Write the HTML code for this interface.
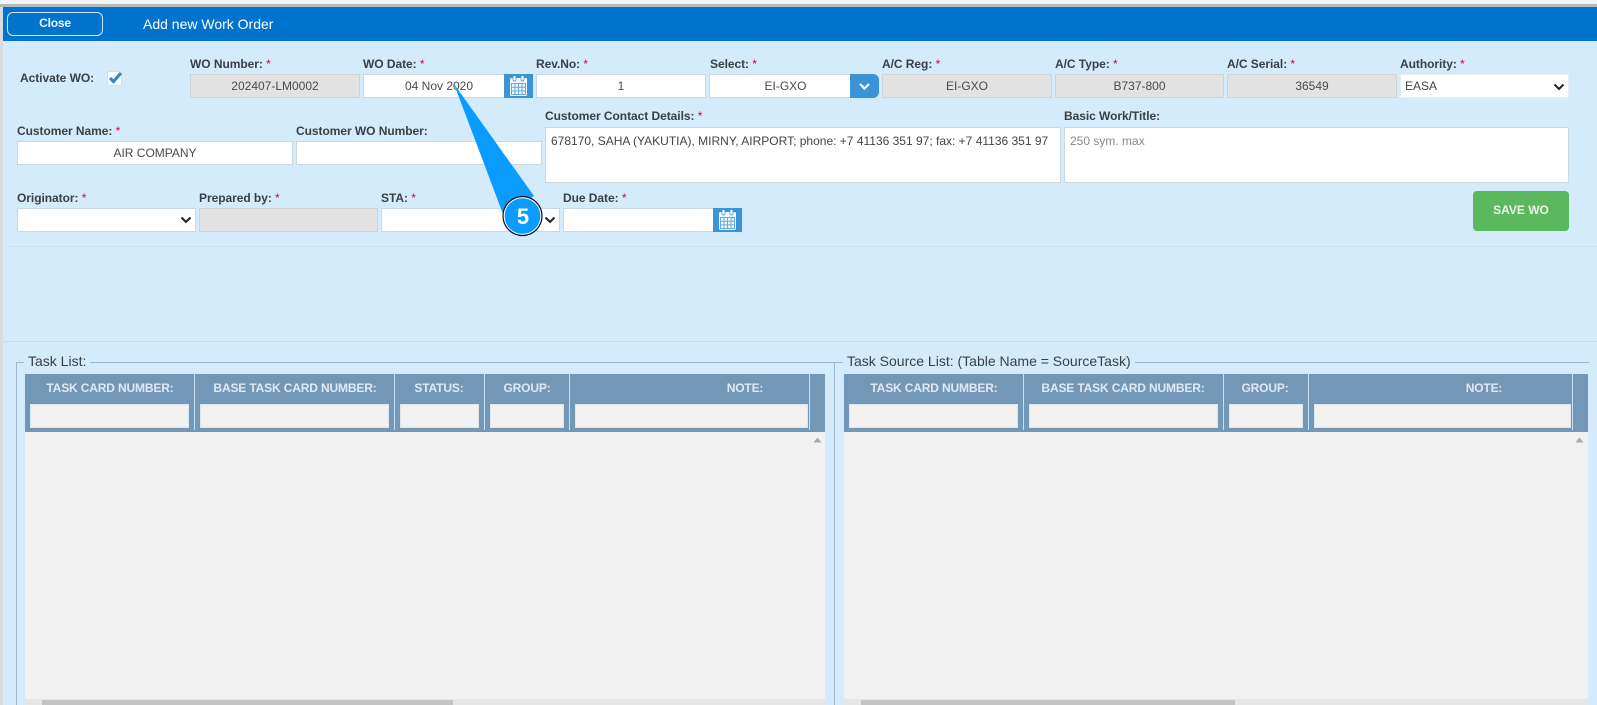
<!DOCTYPE html>
<html><head><meta charset="utf-8">
<style>
*{box-sizing:border-box}
html,body{margin:0;padding:0;width:1597px;height:705px;overflow:hidden;background:#d4ebfc;font-family:"Liberation Sans",Arial,sans-serif;color:#555}
div,svg{position:absolute}
.l{font-size:12px;font-weight:bold;color:#3a3f44;white-space:nowrap;line-height:14px;height:14px;letter-spacing:-.05px}
.l i{font-style:normal;font-weight:normal;color:#d9003a}
.f{background:#fff;border:1px solid #cbd8e2;height:24px;font-size:12px;line-height:22px;text-align:center;white-space:nowrap;color:#4a4a4a}
.d{background:#e2e2e2;border-color:#cdd4d9}
.h{background:#7398b7;top:374px;height:58px}
.s{background:#c4dff3;top:373px;width:1px;height:57px}
.t{top:381px;height:14px;line-height:14px;font-size:12px;font-weight:bold;letter-spacing:-.15px;color:#dfe9f2;white-space:nowrap;transform:translateX(-50%)}
.q{background:#f1f1f1;top:404px;height:24px;border:1px solid #dbe6ee}
.b{background:#f1f1f1;top:432px;height:273px}
.g{background:#9fb7ca}
.lg{font-size:14px;color:#3a3f44;line-height:16px;white-space:nowrap;background:#d4ebfc;padding:0 4px;top:353px}
.c{background:#3a94d5;width:29px;height:24px}
</style></head><body>
<div style="left:0;top:0;width:1597px;height:4px;background:#f3f6f9"></div>
<div style="left:0;top:4px;width:1597px;height:3px;background:#b4bcc2"></div>
<div style="left:0;top:7px;width:3px;height:698px;background:#d9dcde"></div>
<div style="left:3px;top:7px;width:1594px;height:34px;background:#0073cc"></div>
<div style="left:7px;top:12px;width:96px;height:24px;border:1px solid #cfe6f7;border-radius:6px;color:#f2f8fd;font-size:12px;font-weight:bold;letter-spacing:-.2px;text-align:center;line-height:20px">Close</div>
<div style="left:143px;top:16px;font-size:14px;line-height:17px;color:#fff;white-space:nowrap">Add new Work Order</div>

<div class="l" style="left:20px;top:71px">Activate WO:</div>
<div style="left:107px;top:71px;width:15px;height:15px;background:#fff;border:1px solid #d5dde3;border-radius:2px"></div>
<svg style="left:107px;top:70px" width="16" height="15" viewBox="0 0 16 15"><path d="M3 8l3.500 3.500L14 3" fill="none" stroke="#3a87c8" stroke-width="3.200"/></svg>

<div class="l" style="left:190px;top:57px">WO Number: <i>*</i></div>
<div class="f d" style="left:190px;top:74px;width:170px">202407-LM0002</div>
<div class="l" style="left:363px;top:57px">WO Date: <i>*</i></div>
<div class="f" style="left:363px;top:74px;width:142px;padding-left:10px">04 Nov 2020</div>
<div class="c" style="left:504px;top:74px"></div>
<svg style="left:504px;top:74px" width="29" height="24" viewBox="0 0 29 24"><rect x="6" y="4" width="17" height="18" rx="1.500" fill="#f2f8fd"/><rect x="9" y="1.500" width="3" height="5.500" rx="1.200" fill="#f2f8fd" stroke="#3a94d5" stroke-width=".7"/><rect x="17" y="1.500" width="3" height="5.500" rx="1.200" fill="#f2f8fd" stroke="#3a94d5" stroke-width=".7"/><path d="M7.500 9.500h14v11h-14z M7.500 13.200h14 M7.500 16.900h14 M11 9.500v11 M14.500 9.500v11 M18 9.500v11" fill="none" stroke="#62aae0" stroke-width="1"/></svg>
<div class="l" style="left:536px;top:57px">Rev.No: <i>*</i></div>
<div class="f" style="left:536px;top:74px;width:170px">1</div>
<div class="l" style="left:710px;top:57px">Select: <i>*</i></div>
<div class="f" style="left:709px;top:74px;width:143px;padding-left:10px">EI-GXO</div>
<div style="left:850px;top:74px;width:29px;height:24px;background:#3a94d5;border-radius:0 6px 6px 0"></div>
<svg style="left:850px;top:74px" width="29" height="24"><path d="M10 10l4.500 4.500L19 10" fill="none" stroke="#fff" stroke-width="2.200"/></svg>
<div class="l" style="left:882px;top:57px">A/C Reg: <i>*</i></div>
<div class="f d" style="left:882px;top:74px;width:170px">EI-GXO</div>
<div class="l" style="left:1055px;top:57px">A/C Type: <i>*</i></div>
<div class="f d" style="left:1055px;top:74px;width:169px">B737-800</div>
<div class="l" style="left:1227px;top:57px">A/C Serial: <i>*</i></div>
<div class="f d" style="left:1227px;top:74px;width:170px">36549</div>
<div class="l" style="left:1400px;top:57px">Authority: <i>*</i></div>
<div class="f" style="left:1400px;top:74px;width:169px;text-align:left;padding-left:4px;color:#444;border-color:#e6eff6">EASA</div>
<svg style="left:1553px;top:82px" width="12" height="9"><path d="M1.500 2.500L6 7l4.500-4.500" fill="none" stroke="#222" stroke-width="2"/></svg>

<div class="l" style="left:17px;top:124px">Customer Name: <i>*</i></div>
<div class="f" style="left:17px;top:141px;width:276px">AIR COMPANY</div>
<div class="l" style="left:296px;top:124px">Customer WO Number:</div>
<div class="f" style="left:296px;top:141px;width:246px"></div>
<div class="l" style="left:545px;top:109px">Customer Contact Details: <i>*</i></div>
<div class="f" style="left:545px;top:127px;width:516px;height:56px;text-align:left;padding:0 5px;line-height:26px;color:#444">678170, SAHA (YAKUTIA), MIRNY, AIRPORT; phone: +7 41136 351 97; fax: +7 41136 351 97</div>
<div class="l" style="left:1064px;top:109px">Basic Work/Title:</div>
<div class="f" style="left:1064px;top:127px;width:505px;height:56px;text-align:left;padding:0 5px;line-height:26px;color:#888">250 sym. max</div>

<div class="l" style="left:17px;top:191px">Originator: <i>*</i></div>
<div class="f" style="left:17px;top:208px;width:179px"></div>
<svg style="left:180px;top:215px" width="12" height="9"><path d="M1.500 2.500L6 7l4.500-4.500" fill="none" stroke="#222" stroke-width="2"/></svg>
<div class="l" style="left:199px;top:191px">Prepared by: <i>*</i></div>
<div class="f d" style="left:199px;top:208px;width:179px"></div>
<div class="l" style="left:381px;top:191px">STA: <i>*</i></div>
<div class="f" style="left:381px;top:208px;width:179px"></div>
<svg style="left:544px;top:215px" width="12" height="9"><path d="M1.500 2.500L6 7l4.500-4.500" fill="none" stroke="#222" stroke-width="2"/></svg>
<div class="l" style="left:563px;top:191px">Due Date: <i>*</i></div>
<div class="f" style="left:563px;top:208px;width:151px"></div>
<div class="c" style="left:713px;top:208px"></div>
<svg style="left:713px;top:208px" width="29" height="24" viewBox="0 0 29 24"><rect x="6" y="4" width="17" height="18" rx="1.500" fill="#f2f8fd"/><rect x="9" y="1.500" width="3" height="5.500" rx="1.200" fill="#f2f8fd" stroke="#3a94d5" stroke-width=".7"/><rect x="17" y="1.500" width="3" height="5.500" rx="1.200" fill="#f2f8fd" stroke="#3a94d5" stroke-width=".7"/><path d="M7.500 9.500h14v11h-14z M7.500 13.200h14 M7.500 16.900h14 M11 9.500v11 M14.500 9.500v11 M18 9.500v11" fill="none" stroke="#62aae0" stroke-width="1"/></svg>
<div style="left:1473px;top:191px;width:96px;height:40px;background:#5cb85c;border-radius:4px;color:#eaf6ea;font-size:12px;font-weight:bold;text-align:center;line-height:39px">SAVE WO</div>

<div style="left:8px;top:246px;width:1589px;height:1px;background:#c8e0f2"></div>
<div style="left:3px;top:341px;width:1594px;height:1px;background:#c3dbed"></div>

<div class="g" style="left:16px;top:362px;width:818px;height:1px"></div>
<div class="g" style="left:16px;top:362px;width:1px;height:343px"></div>
<div class="lg" style="left:24px">Task List:</div>
<div class="g" style="left:834px;top:362px;width:755px;height:1px"></div>
<div class="g" style="left:834px;top:362px;width:1px;height:343px"></div>
<div class="lg" style="left:843px">Task Source List: (Table Name = SourceTask)</div>

<div class="h" style="left:25px;width:800px"></div>
<div class="s" style="left:194px"></div><div class="s" style="left:394px"></div><div class="s" style="left:484px"></div><div class="s" style="left:569px"></div><div class="s" style="left:809px"></div>
<div class="t" style="left:110px">TASK CARD NUMBER:</div>
<div class="t" style="left:295px">BASE TASK CARD NUMBER:</div>
<div class="t" style="left:439px">STATUS:</div>
<div class="t" style="left:527px">GROUP:</div>
<div class="t" style="left:745px">NOTE:</div>
<div class="q" style="left:30px;width:159px"></div>
<div class="q" style="left:200px;width:189px"></div>
<div class="q" style="left:400px;width:79px"></div>
<div class="q" style="left:490px;width:74px"></div>
<div class="q" style="left:575px;width:233px"></div>
<div class="b" style="left:25px;width:800px"></div>
<svg style="left:813px;top:437px" width="9" height="6"><path d="M0.500 5.500L4.500 0.500l4 5z" fill="#a8a8a8"/></svg>
<div style="left:25px;top:699px;width:800px;height:6px;background:#e6e6e6"></div>
<div style="left:42px;top:700px;width:411px;height:5px;background:#c4c4c4"></div>

<div class="h" style="left:844px;width:744px"></div>
<div class="s" style="left:1023px"></div><div class="s" style="left:1223px"></div><div class="s" style="left:1308px"></div><div class="s" style="left:1572px"></div>
<div class="t" style="left:934px">TASK CARD NUMBER:</div>
<div class="t" style="left:1123px">BASE TASK CARD NUMBER:</div>
<div class="t" style="left:1265px">GROUP:</div>
<div class="t" style="left:1484px">NOTE:</div>
<div class="q" style="left:849px;width:169px"></div>
<div class="q" style="left:1029px;width:189px"></div>
<div class="q" style="left:1229px;width:74px"></div>
<div class="q" style="left:1314px;width:257px"></div>
<div class="b" style="left:844px;width:744px"></div>
<svg style="left:1575px;top:437px" width="9" height="6"><path d="M0.500 5.500L4.500 0.500l4 5z" fill="#a8a8a8"/></svg>
<div style="left:844px;top:699px;width:744px;height:6px;background:#e6e6e6"></div>
<div style="left:861px;top:700px;width:374px;height:5px;background:#c4c4c4"></div>

<svg style="left:0;top:0" width="1597" height="705" viewBox="0 0 1597 705">
<path d="M454 84L534 196L503 214Z" fill="#0a9bff"/>
<circle cx="522.500" cy="216" r="19.500" fill="#0a9bff" stroke="#111" stroke-width="1.200"/>
<circle cx="522.500" cy="216" r="18.300" fill="none" stroke="#fff" stroke-width="1"/>
<text x="523" y="224" text-anchor="middle" font-family="'Liberation Sans',sans-serif" font-weight="bold" font-size="22" fill="#fff">5</text>
</svg>
</body></html>
